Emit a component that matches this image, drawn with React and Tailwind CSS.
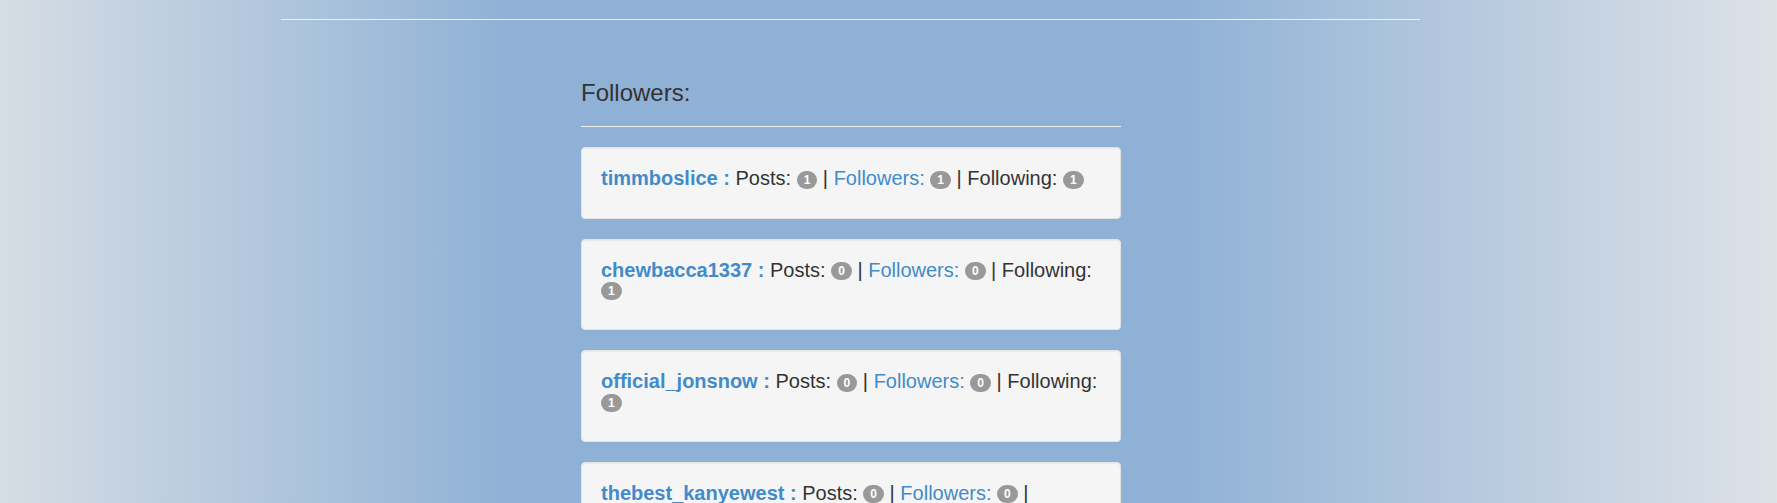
const followers = [
  { name: "timmboslice", posts: 1, followers: 1, following: 1 },
  { name: "chewbacca1337", posts: 0, followers: 0, following: 1 },
  { name: "official_jonsnow", posts: 0, followers: 0, following: 1 },
  { name: "thebest_kanyewest", posts: 0, followers: 0, following: 1 }
];

function Badge({ count }) {
  return (
    <span className="inline-block min-w-[10px] px-[7px] py-[3px] text-[12px] font-bold leading-none text-white bg-[#999] rounded-[10px] align-middle whitespace-nowrap text-center">
      {count}
    </span>
  );
}

function FollowerCard({ user }) {
  return (
    <div className="bg-[#f5f5f5] border border-[#e3e3e3] rounded-[4px] shadow-[inset_0_1px_1px_rgba(0,0,0,0.05)] px-[19px] pt-[21px] pb-[29px] mb-[20px]">
      <div className="text-[20px] leading-[18px] text-[#333]">
        <a href="#" className="font-bold text-[#428bca]">
          {user.name} :
        </a>{" "}
        Posts: <Badge count={user.posts} /> |{" "}
        <a href="#" className="text-[#428bca]">
          Followers:
        </a>{" "}
        <Badge count={user.followers} /> | Following:{" "}
        <Badge count={user.following} />
      </div>
    </div>
  );
}

function App() {
  return (
    <div
      className="min-h-screen overflow-hidden bg-[linear-gradient(to_right,#d6dde4_0%,#8fb1d6_28.7%,#8fb1d6_66%,#dee2e7_100%)]"
      style={{ fontFamily: '"Liberation Sans", Arial, sans-serif' }}
    >
      <div className="w-[1139px] ml-[281px]">

        <div className="mt-[19px] h-px bg-[#eee]" />

        <div className="ml-[300px] w-[540px]">

          <h3 className="mt-[60px] text-[24px] leading-[26px] font-normal text-[#333]">
            Followers:
          </h3>

          <div className="mt-[20px] mb-[20px] h-px bg-[#eee]" />

          {followers.map((user) => (
            <FollowerCard key={user.name} user={user} />
          ))}

        </div>

      </div>
    </div>
  );
}

export default App;
